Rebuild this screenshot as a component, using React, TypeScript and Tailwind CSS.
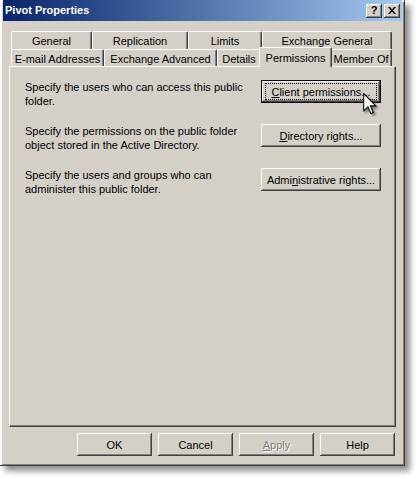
import type { ReactNode } from "react";

type Tab = { label: string; w: string; selected?: boolean };

const backRow: Tab[] = [
  { label: "General", w: "w-[81px]" },
  { label: "Replication", w: "w-[96px]" },
  { label: "Limits", w: "w-[74px]" },
  { label: "Exchange General", w: "w-[130px]" },
];

const frontRow: Tab[] = [
  { label: "E-mail Addresses", w: "w-[93px]" },
  { label: "Exchange Advanced", w: "w-[113px]" },
  { label: "Details", w: "w-[44px]" },
  { label: "Permissions", w: "w-[73px]", selected: true },
  { label: "Member Of", w: "w-[62px]" },
];

const bevel =
  "shadow-[inset_-1px_-1px_#404040,inset_1px_1px_#ffffff,inset_-2px_-2px_#808080,inset_2px_2px_#d4d0c8]";

function TabItem({ tab }: { tab: Tab }) {
  if (tab.selected) {
    return (
      <div
        className={`relative z-10 -mx-[2px] -mt-[2px] h-[20px] shrink-0 ${tab.w} rounded-t-[2px] border-l border-t border-r border-white border-r-[#404040] bg-[#d4d0c8] pt-[3px] text-center leading-[14px] shadow-[inset_-1px_0_#808080]`}
      >
        {tab.label}
      </div>
    );
  }
  return (
    <div
      className={`h-full shrink-0 ${tab.w} rounded-t-[2px] border-l border-t border-r border-white border-r-[#404040] pt-[2px] text-center leading-[14px] shadow-[inset_-1px_0_#808080]`}
    >
      {tab.label}
    </div>
  );
}

function Button({
  children,
  w = "w-[75px]",
  isDefault,
  disabled,
}: {
  children: ReactNode;
  w?: string;
  isDefault?: boolean;
  disabled?: boolean;
}) {
  return (
    <div
      className={`relative flex h-[23px] shrink-0 items-center justify-center ${w} ${bevel} ${
        isDefault ? "border border-black" : ""
      } ${disabled ? "text-[#808080] [text-shadow:1px_1px_0_#ffffff]" : "text-black"}`}
    >
      {isDefault && (
        <span className="pointer-events-none absolute inset-x-[3px] inset-y-[2px] border border-dotted border-black" />
      )}
      <span className="leading-[14px]">{children}</span>
    </div>
  );
}

const rows: { lines: string[]; button: ReactNode; isDefault?: boolean }[] = [
  {
    lines: ["Specify the users who can access this public", "folder."],
    button: (
      <>
        <u>C</u>lient permissions...
      </>
    ),
    isDefault: true,
  },
  {
    lines: [
      "Specify the permissions on the public folder",
      "object stored in the Active Directory.",
    ],
    button: (
      <>
        <u>D</u>irectory rights...
      </>
    ),
  },
  {
    lines: ["Specify the users and groups who can", "administer this public folder."],
    button: (
      <>
        Admi<u>n</u>istrative rights...
      </>
    ),
  },
];

function Cursor() {
  return (
    <svg
      className="absolute left-[363px] top-[93px] z-20 drop-shadow-[2px_2px_1px_rgba(0,0,0,0.45)]"
      width="14"
      height="22"
      viewBox="0 0 13 21"
    >
      <path
        d="M0.5 0.5 V17 L4.5 13.2 L7.3 19.6 L9.6 18.6 L6.9 12.3 H12 Z"
        fill="#ffffff"
        stroke="#000000"
        strokeWidth="1"
        strokeLinejoin="miter"
      />
    </svg>
  );
}

export default function App() {
  return (
    <div className="relative h-[478px] w-[416px] bg-white font-['Liberation_Sans',Arial,sans-serif] text-[11px] text-black">
      <div className="flex h-[466px] w-[405px] flex-col bg-[#d4d0c8] px-[3px] pb-[3px] shadow-[inset_-1px_-1px_#404040,inset_2px_2px_#ffffff,inset_-2px_-2px_#808080,5px_5px_6px_rgba(0,0,0,0.45)]">
        {/* title bar */}
        <div className="flex h-[21px] shrink-0 items-center justify-between bg-gradient-to-r from-[#0a246a] to-[#a6caf0] pl-[2px] pr-[2px]">
          <span className="text-[11px] font-bold leading-none text-white">Pivot Properties</span>
          <div className="flex gap-[2px]">
            <div className={`flex h-[14px] w-[16px] items-center justify-center bg-[#d4d0c8] ${bevel}`}>
              <span className="text-[11px] font-bold leading-none">?</span>
            </div>
            <div className={`flex h-[14px] w-[16px] items-center justify-center bg-[#d4d0c8] ${bevel}`}>
              <svg width="8" height="7" viewBox="0 0 8 7">
                <path d="M0 0h2l2 2.5L6 0h2L5 3.5 8 7H6L4 4.5 2 7H0l3-3.5z" fill="#000000" />
              </svg>
            </div>
          </div>
        </div>

        {/* tab control */}
        <div className="ml-[6px] mt-[10px] flex w-[387px] flex-col">
          <div className="flex h-[18px] pl-[2px]">
            {backRow.map((t) => (
              <TabItem key={t.label} tab={t} />
            ))}
          </div>
          <div className="flex h-[17px] pl-[2px]">
            {frontRow.map((t) => (
              <TabItem key={t.label} tab={t} />
            ))}
          </div>
          <div className="flex h-[361px] flex-col gap-[16px] border border-white border-b-[#404040] border-r-[#404040] pl-[15px] pr-[14px] pt-[13px] shadow-[inset_-1px_-1px_#808080]">
            {rows.map((r, i) => (
              <div key={i} className="flex items-start justify-between">
                <p className="whitespace-nowrap leading-[14px]">
                  {r.lines[0]}
                  <br />
                  {r.lines[1]}
                </p>
                <Button w="w-[120px]" isDefault={r.isDefault}>
                  {r.button}
                </Button>
              </div>
            ))}
          </div>
          <div className="mt-[6px] flex justify-end gap-[6px] pr-[1px]">
            <Button>OK</Button>
            <Button>Cancel</Button>
            <Button disabled>
              <u>A</u>pply
            </Button>
            <Button>Help</Button>
          </div>
        </div>
      </div>
      <Cursor />
    </div>
  );
}
